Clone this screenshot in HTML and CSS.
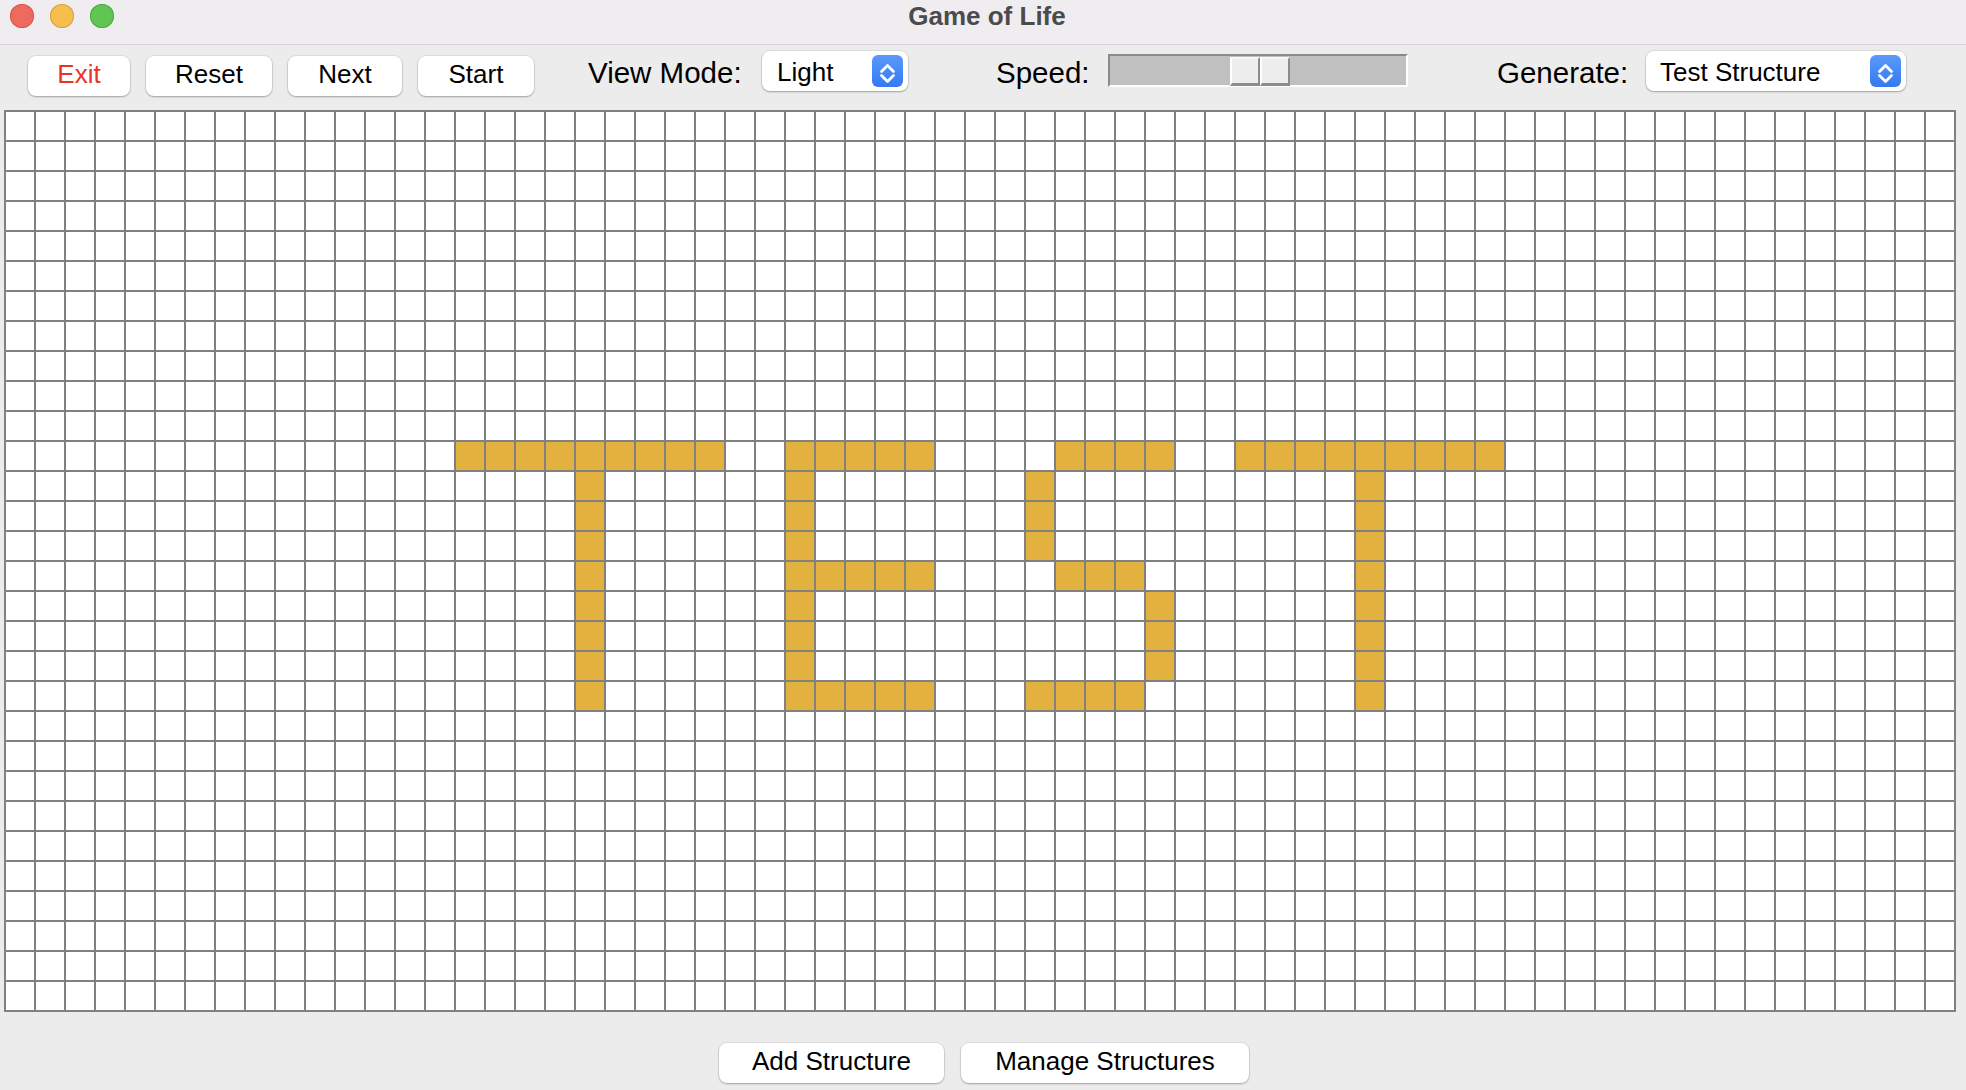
FILE: index.html
```html
<!DOCTYPE html>
<html lang="en">
<head>
<meta charset="utf-8">
<title>Game of Life</title>
<link rel="stylesheet" href="styles.css">
</head>
<body>
<div class="window">
  <header class="titlebar">
    <div class="lights">
      <span class="light red"></span>
      <span class="light yellow"></span>
      <span class="light green"></span>
    </div>
    <div class="title">Game of Life</div>
    <div></div>
  </header>

  <div class="toolbar">
    <button class="btn btn-exit">Exit</button>
    <button class="btn btn-reset">Reset</button>
    <button class="btn btn-next">Next</button>
    <button class="btn btn-start">Start</button>

    <span class="label label-view">View Mode:</span>
    <div class="select select-view">
      <span class="select-text">Light</span>
      <span class="stepper">
        <svg width="31" height="32" viewBox="0 0 31 32"><path d="M9.5 16.5 L15.5 10.5 L21.5 16.5" /><path d="M9.5 20.5 L15.5 26.5 L21.5 20.5" /></svg>
      </span>
    </div>

    <span class="label label-speed">Speed:</span>
    <div class="slider">
      <div class="thumb"><span class="thumb-half"></span><span class="thumb-half"></span></div>
    </div>

    <span class="label label-gen">Generate:</span>
    <div class="select select-gen">
      <span class="select-text">Test Structure</span>
      <span class="stepper">
        <svg width="31" height="32" viewBox="0 0 31 32"><path d="M9.5 16.5 L15.5 10.5 L21.5 16.5" /><path d="M9.5 20.5 L15.5 26.5 L21.5 20.5" /></svg>
      </span>
    </div>
  </div>

  <main class="board-wrap">
    <div class="board" id="board"></div>
  </main>

  <footer class="bottombar">
    <button class="btn btn-add">Add Structure</button>
    <button class="btn btn-manage">Manage Structures</button>
  </footer>
</div>
<script src="script.js"></script>
</body>
</html>
```

FILE: styles.css
```css
* { box-sizing: border-box; }

html, body {
  margin: 0;
  padding: 0;
  width: 1966px;
  height: 1090px;
  overflow: hidden;
  background: #ececec;
  font-family: "Liberation Sans", Arial, sans-serif;
  color: #000;
}

.window {
  width: 1966px;
  height: 1090px;
  display: flex;
  flex-direction: column;
}

/* Title bar */
.titlebar {
  height: 45px;
  background: #efedef;
  border-bottom: 1px solid #d3d1d3;
  display: grid;
  grid-template-columns: 1fr auto 1fr;
  align-items: start;
}

.lights {
  display: flex;
  gap: 16px;
  padding: 4px 0 0 10px;
}

.light {
  width: 24px;
  height: 24px;
  border-radius: 50%;
  display: block;
}
.light.red { background: #ee6a5f; box-shadow: inset 0 0 0 1px #d9574d; }
.light.yellow { background: #f5be4f; box-shadow: inset 0 0 0 1px #d8a140; }
.light.green { background: #61c554; box-shadow: inset 0 0 0 1px #4fa83f; }

.title {
  font-weight: bold;
  font-size: 26px;
  line-height: 30px;
  padding-top: 1px;
  padding-left: 8px;
  color: #4b4b4b;
}

/* Toolbar */
.toolbar {
  height: 65px;
  display: flex;
  align-items: flex-start;
  padding-left: 28px;
}

.btn {
  font-family: "Liberation Sans", Arial, sans-serif;
  font-size: 26px;
  line-height: 36px;
  height: 40px;
  padding: 0 0 4px 0;
  background: #fff;
  border: none;
  border-radius: 8px;
  box-shadow: 0 0 0 1px rgba(0,0,0,0.06), 0 1px 2px rgba(0,0,0,0.28);
  color: #000;
  text-align: center;
}

.toolbar .btn { margin-top: 11px; }
.btn-exit { width: 102px; color: #ea3325; }
.btn-reset { width: 126px; margin-left: 16px; }
.btn-next { width: 114px; margin-left: 16px; }
.btn-start { width: 116px; margin-left: 16px; }

.label {
  font-size: 29.5px;
  line-height: 40px;
  height: 40px;
  margin-top: 8px;
  white-space: nowrap;
}
.label-view { width: 155px; margin-left: 54px; }
.label-speed { width: 93px; margin-left: 88px; }
.label-gen { width: 131px; margin-left: 89px; }

.select {
  position: relative;
  height: 40px;
  margin-top: 6px;
  background: #fff;
  border-radius: 8px;
  box-shadow: 0 0 0 1px rgba(0,0,0,0.06), 0 1px 2px rgba(0,0,0,0.28);
  display: flex;
  align-items: flex-start;
  justify-content: space-between;
  padding: 4px 5px 0 15px;
}
.select-view { width: 146px; margin-left: 19px; }
.select-gen { width: 260px; margin-left: 18px; padding-left: 14px; }

.select-text {
  font-size: 26px;
  line-height: 35px;
}

.stepper {
  width: 31px;
  height: 32px;
  border-radius: 6px;
  background: linear-gradient(#5a9bf8, #3479f1);
  display: block;
}
.stepper svg { display: block; }
.stepper path {
  fill: none;
  stroke: #fff;
  stroke-width: 2.8;
  stroke-linecap: round;
  stroke-linejoin: round;
}

/* Slider */
.slider {
  position: relative;
  width: 300px;
  height: 33px;
  margin-top: 9px;
  margin-left: 19px;
  background: #c0c0c0;
  border-top: 2px solid #8a8a8a;
  border-left: 2px solid #8a8a8a;
  border-bottom: 2px solid #fff;
  border-right: 2px solid #fff;
}

.thumb {
  position: absolute;
  left: 120px;
  top: 1px;
  width: 60px;
  height: 29px;
  display: flex;
}
.thumb-half {
  width: 30px;
  height: 29px;
  background: #ededed;
  border-left: 2px solid #fff;
  border-top: 2px solid #f6f6f6;
  border-right: 2px solid #8c8c8c;
  border-bottom: 3px solid #8c8c8c;
}

/* Board */
.board-wrap {
  padding-left: 4px;
  height: 902px;
}

.board {
  width: 1952px;
  height: 902px;
  display: grid;
  grid-template-columns: repeat(65, 28px);
  grid-auto-rows: 28px;
  gap: 2px;
  padding: 2px;
  background: #808080;
}

.cell { background: #fff; }
.cell.alive { background: #e3b13e; }

/* Bottom bar */
.bottombar {
  display: flex;
  justify-content: center;
  gap: 17px;
  padding-top: 31px;
  padding-left: 2px;
}
.btn-add { width: 225px; }
.btn-manage { width: 288px; }
```

FILE: script.js
```js
(function () {
  var COLS = 65, ROWS = 30;
  var alive = {};
  function set(r, c) { alive[r + "," + c] = true; }
  function hline(r, c0, c1) { for (var c = c0; c <= c1; c++) set(r, c); }
  function vline(c, r0, r1) { for (var r = r0; r <= r1; r++) set(r, c); }

  // T
  hline(11, 15, 23); vline(19, 12, 19);
  // E
  vline(26, 11, 19); hline(11, 27, 30); hline(15, 27, 30); hline(19, 27, 30);
  // S
  hline(11, 35, 38); vline(34, 12, 14); hline(15, 35, 37); vline(38, 16, 18); hline(19, 34, 37);
  // T
  hline(11, 41, 49); vline(45, 12, 19);

  var board = document.getElementById("board");
  var frag = document.createDocumentFragment();
  for (var r = 0; r < ROWS; r++) {
    for (var c = 0; c < COLS; c++) {
      var d = document.createElement("div");
      d.className = alive[r + "," + c] ? "cell alive" : "cell";
      frag.appendChild(d);
    }
  }
  board.appendChild(frag);
})();
```
